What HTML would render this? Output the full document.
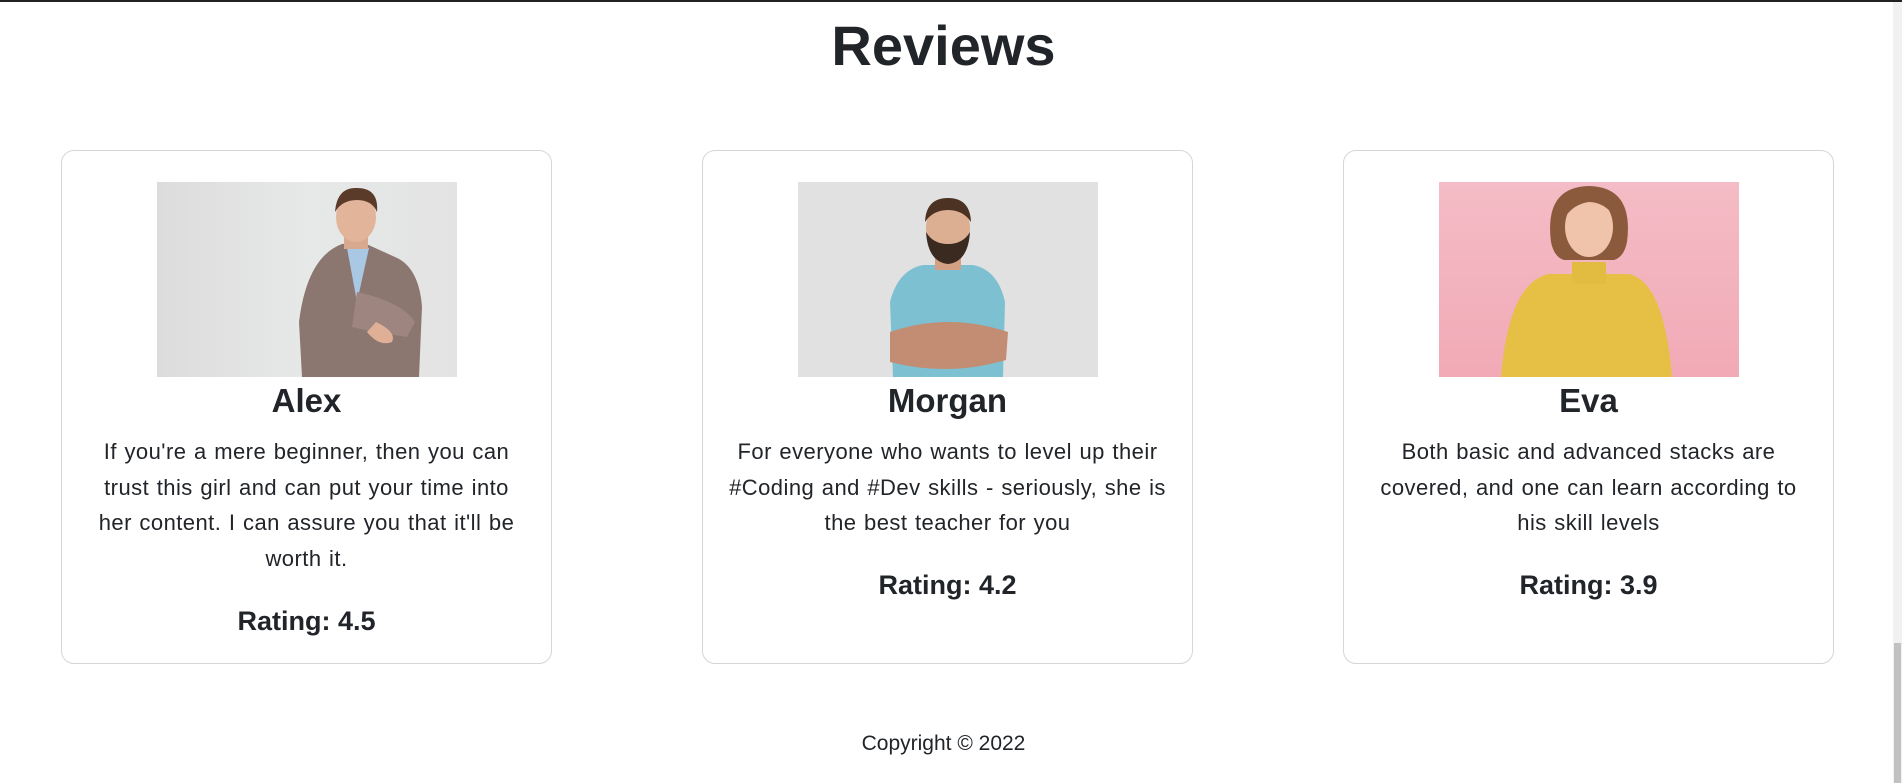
<!DOCTYPE html>
<html><head><meta charset="utf-8"><style>
*{margin:0;padding:0;box-sizing:border-box}
html,body{width:1902px;height:783px;overflow:hidden;background:#fff;font-family:"Liberation Sans",sans-serif;color:#212529}
.top{position:absolute;left:0;top:0;width:1902px;height:2px;background:#222}
.sb{position:absolute;right:0;top:2px;width:9px;height:781px;background:#f1f1f1}
.sb div{position:absolute;left:1px;bottom:0;width:7px;height:140px;background:#c1c1c1}
h1{position:absolute;left:0;width:1887px;top:11px;text-align:center;font-size:56px;font-weight:bold;line-height:70px;letter-spacing:0px}
.card{position:absolute;top:150px;width:491px;height:514px;border:1px solid #d6d6d6;border-radius:13px;text-align:center}
.img{position:absolute;left:95px;top:31px;width:300px;height:195px;overflow:hidden}
.name{position:absolute;left:0;width:100%;top:228px;font-size:33px;font-weight:bold;line-height:44px}
.txt{position:absolute;left:0;width:100%;top:283px;font-size:22px;letter-spacing:0.45px;word-spacing:1px;line-height:35.7px;white-space:nowrap}
.rat{position:absolute;left:0;width:100%;font-size:27px;font-weight:bold;line-height:36px}
.foot{position:absolute;left:0;width:1887px;top:729px;text-align:center;font-size:21px;line-height:30px}
</style></head><body>
<div class="top"></div>
<div class="sb"><div></div></div>
<h1>Reviews</h1>

<div class="card" style="left:61px">
 <div class="img"><svg width="300" height="195" viewBox="0 0 300 195">
  <defs><linearGradient id="g1" x1="0" x2="1"><stop offset="0" stop-color="#dcdcdc"/><stop offset="0.5" stop-color="#e7e8e8"/><stop offset="1" stop-color="#e3e3e3"/></linearGradient></defs>
  <rect width="300" height="195" fill="url(#g1)"/>
  <path d="M145 195 L142 140 Q150 75 185 62 L205 60 L238 75 Q262 85 265 125 L262 195 Z" fill="#8c7670"/>
  <path d="M190 66 L200 62 L212 66 L200 120 Z" fill="#a9c8e4"/>
  <path d="M200 110 Q245 120 258 140 L250 155 Q215 150 195 145 Z" fill="#9e8580"/>
  <rect x="187" y="45" width="24" height="22" fill="#d9a98f"/>
  <ellipse cx="199" cy="35" rx="20" ry="25" fill="#e2b49a"/>
  <path d="M178 30 Q180 5 200 6 Q222 6 220 30 Q215 18 200 18 Q185 18 178 30Z" fill="#5a3a28"/>
  <path d="M219 140 Q240 150 235 160 Q222 165 210 150Z" fill="#e0b096"/>
 </svg></div>
 <div class="name">Alex</div>
 <div class="txt">If you're a mere beginner, then you can<br>trust this girl and can put your time into<br>her content. I can assure you that it'll be<br>worth it.</div>
 <div class="rat" style="top:452px">Rating: 4.5</div>
</div>

<div class="card" style="left:702px">
 <div class="img"><svg width="300" height="195" viewBox="0 0 300 195">
  <rect width="300" height="195" fill="#e1e1e2"/>
  <path d="M95 195 L92 120 Q100 88 125 83 L175 83 Q200 88 207 120 L205 195 Z" fill="#7dc0d2"/>
  <path d="M92 150 Q150 130 210 150 L208 178 Q150 195 92 180 Z" fill="#c28d72"/>
  <rect x="137" y="68" width="26" height="20" fill="#d3a083"/>
  <ellipse cx="150" cy="46" rx="22" ry="27" fill="#dcae92"/>
  <path d="M128 50 Q130 80 150 82 Q170 80 172 50 Q165 62 150 62 Q135 62 128 50Z" fill="#3a2a20"/>
  <path d="M127 40 Q128 16 150 16 Q172 16 173 40 Q165 28 150 28 Q135 28 127 40Z" fill="#4b3222"/>
 </svg></div>
 <div class="name">Morgan</div>
 <div class="txt">For everyone who wants to level up their<br>#Coding and #Dev skills - seriously, she is<br>the best teacher for you</div>
 <div class="rat" style="top:416px">Rating: 4.2</div>
</div>

<div class="card" style="left:1343px">
 <div class="img"><svg width="300" height="195" viewBox="0 0 300 195">
  <defs><linearGradient id="g3" x1="0" y1="0" x2="0" y2="1"><stop offset="0" stop-color="#f4bcc6"/><stop offset="1" stop-color="#f1aab6"/></linearGradient></defs>
  <rect width="300" height="195" fill="url(#g3)"/>
  <path d="M62 195 Q70 100 110 92 L190 92 Q225 100 233 195 Z" fill="#e6c044"/>
  <rect x="133" y="80" width="34" height="22" fill="#e2bc40"/>
  <path d="M112 60 Q105 5 150 4 Q195 5 188 60 Q185 75 175 78 L125 78 Q115 75 112 60Z" fill="#8b5a3c"/>
  <ellipse cx="150" cy="45" rx="24" ry="30" fill="#f0c4aa"/>
  <path d="M126 35 Q130 10 150 10 Q172 10 176 35 Q165 20 150 20 Q135 22 126 35Z" fill="#8b5a3c"/>
 </svg></div>
 <div class="name">Eva</div>
 <div class="txt">Both basic and advanced stacks are<br>covered, and one can learn according to<br>his skill levels</div>
 <div class="rat" style="top:416px">Rating: 3.9</div>
</div>

<div class="foot">Copyright © 2022</div>
</body></html>
